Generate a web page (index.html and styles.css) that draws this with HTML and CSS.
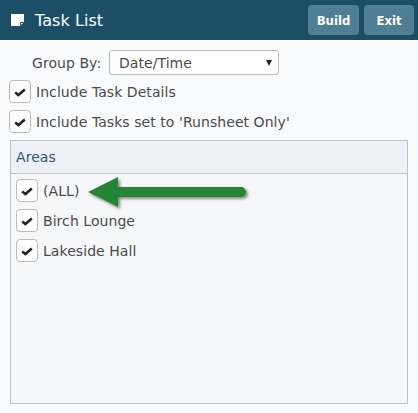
FILE: index.html
```html
<!DOCTYPE html>
<html lang="en">
<head>
<meta charset="UTF-8" />
<meta name="viewport" content="width=device-width, initial-scale=1" />
<title>Task List</title>
<link rel="stylesheet" href="styles.css">
</head>
<body>

<header class="titlebar">
  <svg class="title-icon" width="13" height="12" viewBox="0 0 13 12">
    <path d="M0 0h13v8l-4 4H0z" fill="#fff"/>
    <path d="M9.5 11.5V8.5h3" fill="none" stroke="#1c4f66" stroke-width="1"/>
  </svg>
  <h1>Task List</h1>
  <button class="bar-btn build">Build</button>
  <button class="bar-btn exit">Exit</button>
</header>

<main class="content">
  <div class="group-row">
    <label class="group-label">Group By:</label>
    <div class="select">
      <span>Date/Time</span>
      <span class="caret"></span>
    </div>
  </div>

  <div class="check-row">
    <span class="check"><svg width="12" height="10" viewBox="0 0 12 10"><path d="M1.2 5.4l3.2 2.6L10.8 2.6" fill="none" stroke="#222" stroke-width="2.6"/></svg></span>
    <span>Include Task Details</span>
  </div>
  <div class="check-row">
    <span class="check"><svg width="12" height="10" viewBox="0 0 12 10"><path d="M1.2 5.4l3.2 2.6L10.8 2.6" fill="none" stroke="#222" stroke-width="2.6"/></svg></span>
    <span>Include Tasks set to 'Runsheet Only'</span>
  </div>

  <section class="panel">
    <div class="panel-head">Areas</div>
    <div class="panel-body">
      <div class="check-row">
        <span class="check"><svg width="12" height="10" viewBox="0 0 12 10"><path d="M1.2 5.4l3.2 2.6L10.8 2.6" fill="none" stroke="#222" stroke-width="2.6"/></svg></span>
        <span>(ALL)</span>
      </div>
      <div class="check-row">
        <span class="check"><svg width="12" height="10" viewBox="0 0 12 10"><path d="M1.2 5.4l3.2 2.6L10.8 2.6" fill="none" stroke="#222" stroke-width="2.6"/></svg></span>
        <span>Birch Lounge</span>
      </div>
      <div class="check-row">
        <span class="check"><svg width="12" height="10" viewBox="0 0 12 10"><path d="M1.2 5.4l3.2 2.6L10.8 2.6" fill="none" stroke="#222" stroke-width="2.6"/></svg></span>
        <span>Lakeside Hall</span>
      </div>
    </div>
  </section>
</main>

<!-- annotation arrow over the list -->
<svg class="arrow" width="180" height="48" viewBox="0 0 180 48">
  <defs>
    <filter id="arrowShadow" x="-10%" y="-20%" width="125%" height="150%">
      <feDropShadow dx="2" dy="2" stdDeviation="1.6" flood-color="#000" flood-opacity="0.45"/>
    </filter>
  </defs>
  <path d="M8 20 L38 5 V15 H161 a5 5 0 0 1 0 10 H38 V35 Z" fill="#268434" filter="url(#arrowShadow)"/>
</svg>

</body>
</html>
```
FILE: styles.css
```css
html, body {
  margin: 0;
  height: 100%;
}
body {
  font-family: "DejaVu Sans", Verdana, sans-serif;
  font-size: 14px;
  letter-spacing: 0.06px;
  background: #fafbfd;
  color: #4a4a4a;
  position: relative;
  overflow: hidden;
}
.titlebar {
  display: flex;
  align-items: center;
  height: 40px;
  background: #1c4f66;
  padding: 0 4px 0 11px;
  box-sizing: border-box;
}
.titlebar h1 {
  flex: 1;
  margin: 0 0 0 11px;
  font-size: 16px;
  font-weight: normal;
  color: #fff;
}
.title-icon {
  flex: none;
}
.bar-btn {
  height: 30px;
  border: 0;
  border-radius: 4px;
  background: #4f7d94;
  color: #fff;
  font-family: "DejaVu Sans Condensed", "DejaVu Sans", sans-serif;
  font-size: 13px;
  font-weight: bold;
  padding: 0;
}
.build {
  width: 51px;
  margin-right: 5px;
}
.exit {
  width: 50px;
}
.content {
  padding: 10px 10px 0 9px;
}
.group-row {
  display: flex;
  align-items: center;
  height: 25px;
  margin-bottom: 5px;
}
.group-label {
  width: 100px;
  padding-left: 23px;
  box-sizing: border-box;
}
.select {
  display: flex;
  align-items: center;
  justify-content: space-between;
  width: 170px;
  height: 25px;
  box-sizing: border-box;
  border: 1px solid #bbb;
  border-radius: 3px;
  background: #fff;
  padding: 0 6px 0 9px;
}
.caret {
  width: 0;
  height: 0;
  border-left: 3px solid transparent;
  border-right: 3px solid transparent;
  border-top: 6px solid #1a2230;
}
.check-row {
  display: flex;
  align-items: center;
  gap: 5px;
  height: 23px;
  margin-bottom: 7px;
}
.check {
  display: flex;
  align-items: center;
  justify-content: center;
  width: 22px;
  height: 23px;
  box-sizing: border-box;
  border: 1px solid #bbb;
  border-radius: 4px;
  background: #fff;
}
.panel {
  display: flex;
  flex-direction: column;
  box-sizing: border-box;
  height: 264px;
  margin: 0 0 0 1px;
  border: 1px solid #bfc3c8;
  background: #f6f7f9;
}
.panel-head {
  height: 32px;
  line-height: 32px;
  padding-left: 5px;
  background: #eef1f5;
  border-bottom: 1px solid #bfc3c8;
  color: #2d5a72;
}
.panel-body {
  padding: 5px 5px;
}
.arrow {
  position: absolute;
  left: 80px;
  top: 172px;
}
```
